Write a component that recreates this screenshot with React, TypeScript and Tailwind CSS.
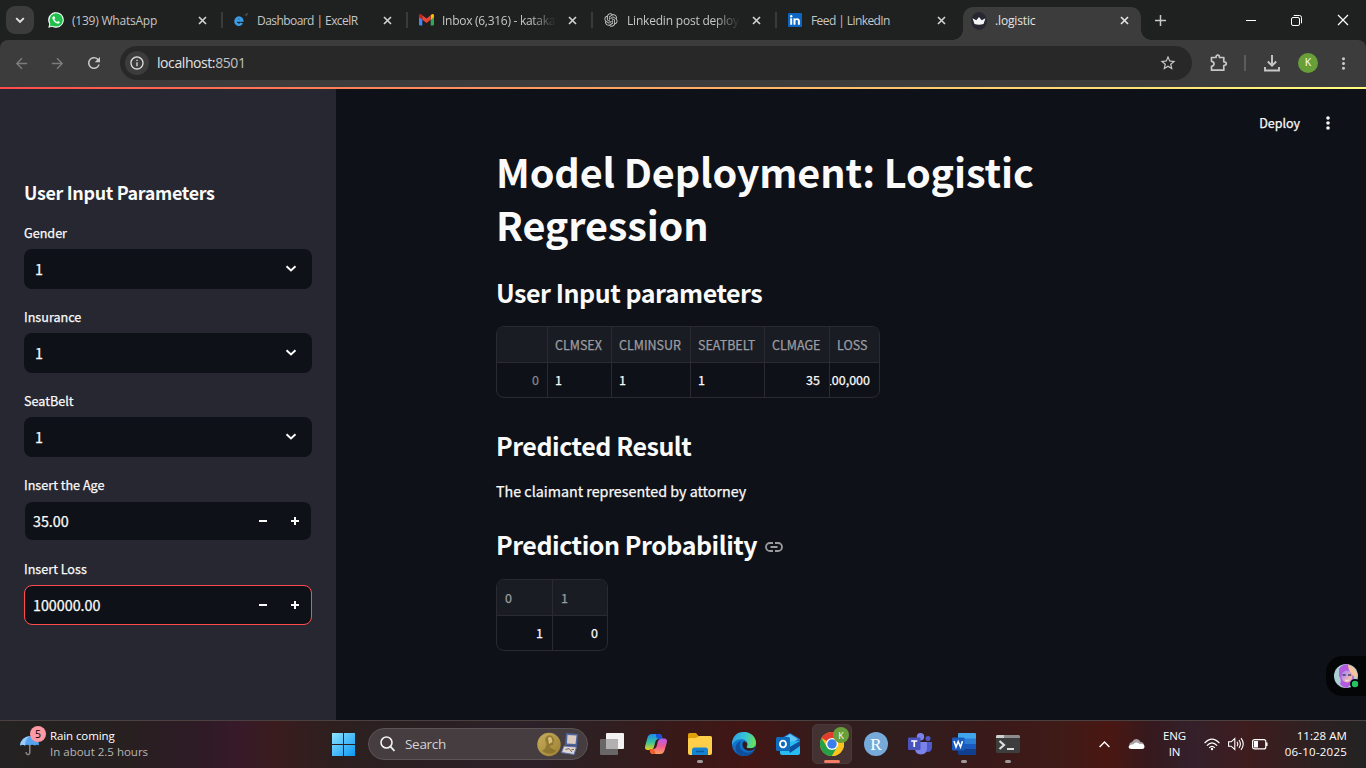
import React from "react";
import { RiOpenaiFill } from "react-icons/ri";
import {
  MdStarOutline,
  MdMoreVert,
  MdRefresh,
  MdArrowBack,
  MdArrowForward,
  MdOutlineInfo,
} from "react-icons/md";

const seg = "font-['Open_Sans','Noto_Sans',sans-serif]";
const src = "font-['Noto_Sans_CJK_SC',sans-serif]";
const heavy = "[-webkit-text-stroke:0.25px]";

/* ---------- favicons ---------- */

const WhatsApp = () => (
  <svg width="16" height="16" viewBox="0 0 16 16">
    <path d="M0.3 15.8 1.3 12A7.8 7.8 0 1 1 4.2 14.8Z" fill="#fff" />
    <circle cx="8.1" cy="7.9" r="6.7" fill="#1fc04b" />
    <path d="M1.7 14.4l.9-3.4 2.5 2.6z" fill="#1fc04b" />
    <path d="M5.4 4.2c-.9.5-1.3 1.5-.9 2.6.8 2.2 2.5 3.9 4.7 4.7 1.2.4 2.4-.1 2.7-1.4l-1.9-1.1-.9.9C7.8 9.4 6.9 8.4 6.4 7.2l.8-.9-.7-1.9z" fill="#fff" />
  </svg>
);

const ExcelR = () => (
  <svg width="16" height="16" viewBox="0 0 16 16">
    <path d="M2.600 8.400H9.200A3.400 3.600 0 1 0 8.800 11" fill="none" stroke="#3a9de8" strokeWidth="2.500" />
    <path d="M10 3.500 15.500.500 13.500 4.500 12.500 3Z" fill="#4c4c4c" />
  </svg>
);

const Gmail = () => (
  <svg width="15" height="12" viewBox="0 0 15 12">
    <path d="M0 2.500V10.500Q0 11.500 1 11.500H3.300V5Z" fill="#4285f4" />
    <path d="M15 2.500V10.500Q15 11.500 14 11.500H11.700V5Z" fill="#34a853" />
    <path d="M11.700 1.400V5.800L15 3.300V1.600C15 .1 13.400-.4 12.400.6Z" fill="#fbbc04" />
    <path d="M3.300 1.400V5.800L0 3.300V1.600C0 .1 1.600-.4 2.600.6Z" fill="#c5221f" />
    <path d="M3.300 5.800V1.300L7.500 4.400 11.700 1.300V5.800L7.500 9Z" fill="#ea4335" />
  </svg>
);

const LinkedIn = () => (
  <svg width="14" height="14" viewBox="0 0 14 14">
    <rect width="14" height="14" rx="1" fill="#0a66c2" />
    <path d="M2.200 5.300h2v6.500h-2zM5.500 5.300h1.900v.9c.9-1.600 4.500-1.500 4.500 1.800v3.800h-2V8.500c0-2-2.400-1.800-2.400 0v3.300h-2z" fill="#fff" />
    <circle cx="3.200" cy="3.200" r="1.200" fill="#fff" />
  </svg>
);

const Crown = () => (
  <svg width="16" height="18" viewBox="0 0 16 18">
    <ellipse cx="8" cy="9" rx="7.900" ry="9" fill="#262730" />
    <path d="M1.500 6.300 5.300 8.300 8 5 10.700 8.300 14.500 6.300 12.500 12Q8 13.300 3.500 12Z" fill="#f4f4f6" />
  </svg>
);

const Close = ({ c = "#d0d0d0" }: { c?: string }) => (
  <svg width="9" height="9" viewBox="0 0 9 9" className="shrink-0">
    <path d="M1 1 8 8M8 1 1 8" stroke={c} strokeWidth="1.700" />
  </svg>
);

type TabProps = { icon: React.ReactNode; title: string; width: string; pad: string; spacing: string; fade?: boolean };

const Tab = ({ icon, title, width, pad, spacing, fade }: TabProps) => (
  <div className={`flex h-4 shrink-0 items-center border-r-2 border-[#444746]/70 ${width} ${pad}`}>
    <div className="flex w-4 shrink-0 items-center justify-center">{icon}</div>
    <div
      className={`ml-2 flex-1 overflow-hidden whitespace-nowrap pt-px text-[12px] leading-4 text-[#c6c6c6] ${spacing} ${
        fade ? "[mask-image:linear-gradient(to_right,#000_78%,transparent_100%)]" : ""
      }`}
    >
      {title}
    </div>
    <div className="ml-3 mr-[14px]">
      <Close />
    </div>
  </div>
);

const TabStrip = () => (
  <div className={`flex h-10 shrink-0 bg-[#1f2020] ${seg}`}>
    <div className="flex h-10 w-[40px] shrink-0 items-center pl-[6px]">
      <div className="flex size-7 items-center justify-center rounded-[9px] bg-[#3c3c3c]">
        <svg width="10" height="7" viewBox="0 0 10 7">
          <path d="M1.200 1.200 5 5 8.800 1.200" fill="none" stroke="#e3e3e3" strokeWidth="1.900" />
        </svg>
      </div>
    </div>
    <div className="flex items-center">
      <Tab icon={<WhatsApp />} title="(139) WhatsApp" width="w-[183px]" pad="pl-2" spacing="tracking-[-0.22px]" />
      <Tab icon={<ExcelR />} title="Dashboard | ExcelR" width="w-[185px]" pad="pl-[10px]" spacing="tracking-[-0.56px]" />
      <Tab icon={<Gmail />} title="Inbox (6,316) - kataka" width="w-[185px]" pad="pl-[10px]" spacing="tracking-[-0.28px]" fade />
      <Tab icon={<RiOpenaiFill size={16} color="#c9c9c9" />} title="Linkedin post deploy" width="w-[184px]" pad="pl-[10px]" spacing="tracking-[-0.2px]" fade />
      <div className="flex w-[186px] items-center pl-[10px]">
        <div className="flex w-4 justify-center"><LinkedIn /></div>
        <div className="ml-2 flex-1 pt-px text-[12px] leading-4 tracking-[-0.58px] text-[#c6c6c6]">Feed | LinkedIn</div>
        <div className="mr-[17px]"><Close /></div>
      </div>
    </div>
    <div className="relative mt-[7px] flex h-[33px] w-[178px] items-center rounded-t-[10px] bg-[#3c3c3c] pb-[6px] pl-2">
      <div className="absolute bottom-0 left-[-10px] size-[10px] bg-[radial-gradient(circle_at_0_0,transparent_9.5px,#3c3c3c_10px)]" />
      <div className="absolute bottom-0 right-[-10px] size-[10px] bg-[radial-gradient(circle_at_100%_0,transparent_9.5px,#3c3c3c_10px)]" />
      <Crown />
      <div className="ml-2 flex-1 pt-px text-[12px] leading-4 tracking-[-0.15px] text-[#e3e3e3]">.logistic</div>
      <div className="mr-[12px]"><Close c="#e3e3e3" /></div>
    </div>
    <div className="flex flex-1 items-center pl-[14px]">
      <svg width="11" height="11" viewBox="0 0 11 11"><path d="M5.500 0V11M0 5.500H11" stroke="#c7c7c7" strokeWidth="1.500" /></svg>
      <div className="ml-auto flex items-center gap-[35px] pr-[17px]">
        <div className="h-px w-[10px] bg-white" />
        <svg width="11" height="11" viewBox="0 0 11 11" fill="none" stroke="#fff">
          <rect x=".5" y="2.500" width="8" height="8" rx="1.500" />
          <path d="M2.700.500H8.500Q10.500.500 10.500 2.500V8.300" />
        </svg>
        <svg width="12" height="12" viewBox="0 0 12 12"><path d="M1 1 11 11M11 1 1 11" stroke="#fff" strokeWidth="1.200" /></svg>
      </div>
    </div>
  </div>
);

const Toolbar = () => (
  <div className={`h-[47px] shrink-0 bg-[#1f2020] ${seg}`}>
    <div className="flex h-[47px] items-center rounded-t-[8px] bg-[#3c3c3c]">
      <div className="flex h-full w-[120px] items-center gap-[19px] pb-px pl-[13px]">
        <MdArrowBack size={17} color="#7c7c7c" />
        <MdArrowForward size={17} color="#7c7c7c" />
        <MdRefresh size={18} color="#c7c7c7" />
      </div>
      <div className="mb-px flex h-[34px] w-[1072px] items-center rounded-full bg-[#282828] pl-[5px]">
        <div className="flex size-6 items-center justify-center rounded-full bg-[#3c3c3c]">
          <MdOutlineInfo size={16} color="#dcdcdc" />
        </div>
        <div className="ml-2 flex-1 text-[14px] leading-5 tracking-[-0.42px] text-[#e3e3e3]">
          localhost:<span className="text-[#c0c0c0]">8501</span>
        </div>
        <MdStarOutline size={18} color="#c7c7c7" className="mr-[15px]" />
      </div>
      <div className="flex flex-1 items-center pb-px pl-[18px]">
        <svg width="18" height="18" viewBox="0 0 18 18" fill="none" stroke="#c7c7c7" strokeWidth="1.700" strokeLinejoin="round">
          <path d="M1.500 3.500H6Q6 1.200 7.700 1.200Q9.500 1.200 9.500 3.500H13.800V7.800Q16.300 7.800 16.300 9.600Q16.300 11.500 13.800 11.500V16.200H1.500V12.300Q4 12 4 9.800Q4 7.700 1.500 7.300Z" />
        </svg>
        <div className="ml-[16px] h-4 w-[2px] bg-[#5c5c5c]" />
        <svg width="16" height="17" viewBox="0 0 16 17" className="ml-[18px]" fill="none" stroke="#c7c7c7" strokeWidth="1.900">
          <path d="M8 0V10.500M3.800 6.500 8 10.700 12.200 6.500M1 12V15.500H15V12" />
        </svg>
        <div className="ml-[18px] flex size-5 items-center justify-center rounded-full bg-[#689f38] text-[10.500px] text-white">K</div>
        <MdMoreVert size={19} color="#c7c7c7" className="ml-[16px]" />
      </div>
    </div>
  </div>
);

/* ---------- sidebar ---------- */

const Label = ({ children }: { children: React.ReactNode }) => (
  <div className="h-6 text-[12.6px] leading-4 text-[#fafafa]">{children}</div>
);

const Select = ({ label }: { label: string }) => (
  <div className="mb-5">
    <Label>{label}</Label>
    <div className="flex h-10 items-center justify-between rounded-lg bg-[#0e1117] pl-[11px] pr-[15px] text-[14.3px] leading-6 text-[#fafafa]">
      <span className="pb-px">1</span>
      <svg width="12" height="8" viewBox="0 0 12 8"><path d="M1.500 1.300 6 5.500 10.500 1.300" fill="none" stroke="#fafafa" strokeWidth="2" /></svg>
    </div>
  </div>
);

const NumberInput = ({ label, value, focus }: { label: string; value: string; focus?: boolean }) => (
  <div className="mb-5">
    <Label>{label}</Label>
    <div className={`flex h-10 items-center rounded-lg border bg-[#0e1117] bg-clip-padding pl-2 text-[14.3px] leading-6 text-[#fafafa] ${focus ? "border-[#ff4b4b]" : "border-[#262730]"}`}>
      <span className="flex-1 pb-px">{value}</span>
      <svg width="8" height="8" viewBox="0 0 8 8" className="mr-6"><path d="M0 4H8" stroke="#fafafa" strokeWidth="2" /></svg>
      <svg width="8" height="8" viewBox="0 0 8 8" className="mr-3"><path d="M0 4H8M4 0V8" stroke="#fafafa" strokeWidth="2" /></svg>
    </div>
  </div>
);

const Sidebar = () => (
  <div className={`w-[336px] shrink-0 bg-[#262730] px-6 pt-[91px] ${heavy}`}>
    <div className="mb-[21px] text-[17.9px] font-semibold leading-6 tracking-[-0.32px] text-[#fafafa] [-webkit-text-stroke:0]">User Input Parameters</div>
    <Select label="Gender" />
    <Select label="Insurance" />
    <Select label="SeatBelt" />
    <NumberInput label="Insert the Age" value="35.00" />
    <NumberInput label="Insert Loss" value="100000.00" focus />
  </div>
);

/* ---------- main ---------- */

const H2 = ({ children }: { children: React.ReactNode }) => (
  <div className="flex h-[34px] items-center whitespace-nowrap text-[25px] font-semibold leading-[34px] tracking-[-0.46px] [-webkit-text-stroke:0]">{children}</div>
);

const line = "border-[#292b31]";

type Cellv = { v: string; right?: boolean; dim?: boolean };

const Table = ({ cols, head, row, headPad }: { cols: string; head: string[]; row: Cellv[]; headPad: string }) => (
  <div className={`w-fit overflow-hidden rounded-lg border ${line} text-[12.5px] leading-5`}>
    <div className={`grid ${cols} h-9 border-b ${line} bg-[#1a1c24] text-[#9b9ca1]`}>
      {head.map((h, i) => (
        <div key={i} className={`flex items-center ${headPad} pt-px whitespace-nowrap ${i < head.length - 1 ? `border-r ${line}` : ""}`}>{h}</div>
      ))}
    </div>
    <div className={`grid ${cols} h-[34px]`}>
      {row.map((c, i) => (
        <div
          key={i}
          className={`flex items-center overflow-hidden pl-[7px] ${c.right ? "justify-end" : ""} ${c.dim ? "pr-2 text-[#84868b]" : "pr-[9px] text-[#fafafa]"} ${
            i < row.length - 1 ? `border-r ${line}` : ""
          }`}
        >
          {c.v}
        </div>
      ))}
    </div>
  </div>
);

const Main = () => (
  <div className={`flex-1 bg-[#0e1117] text-[#fafafa] ${heavy}`}>
    <div className="flex h-[55px] items-center justify-end pr-[33px] pt-[13px]">
      <div className="mr-[23px] text-[12.5px] leading-5">Deploy</div>
      <svg width="10" height="16" viewBox="0 0 10 16" fill="#fafafa">
        <circle cx="5" cy="3" r="1.800" /><circle cx="5" cy="8" r="1.800" /><circle cx="5" cy="13" r="1.800" />
      </svg>
    </div>
    <div className="w-[864px] pl-40">
      <div className="w-[600px] text-[39.6px] font-bold leading-[53px] tracking-[-0.13px] [-webkit-text-stroke:0]">Model Deployment: Logistic Regression</div>
      <div className="mt-[25px]"><H2>User Input parameters</H2></div>
      <div className="mt-[17px]">
        <Table
          headPad="pl-[7px]"
          cols="grid-cols-[51px_64px_79px_74px_65px_49px]"
          head={["", "CLMSEX", "CLMINSUR", "SEATBELT", "CLMAGE", "LOSS"]}
          row={[{ v: "0", right: true, dim: true }, { v: "1" }, { v: "1" }, { v: "1" }, { v: "35", right: true }, { v: "100,000", right: true }]}
        />
      </div>
      <div className="mt-[30px]"><H2>Predicted Result</H2></div>
      <div className="mt-[17px] text-[14.3px] leading-6">The claimant represented by attorney</div>
      <div className="mt-[24px]">
        <H2>
          Prediction Probability
          <svg width="18" height="10" viewBox="0 0 18 10" className="ml-2 mt-[5px]" fill="none" stroke="#9a9b9f" strokeWidth="1.800">
            <path d="M8 1H5a4 4 0 0 0 0 8H8M10 1h3a4 4 0 0 1 0 8H10M5.500 5H12.500" />
          </svg>
        </H2>
      </div>
      <div className="mt-[18px]">
        <Table headPad="pl-2" cols="grid-cols-[56px_54px]" head={["0", "1"]} row={[{ v: "1", right: true }, { v: "0", right: true }]} />
      </div>
    </div>
  </div>
);

const Assistant = () => (
  <div className="absolute right-0 top-[656px] flex h-10 w-10 items-center rounded-l-2xl bg-[#040506] pl-2">
    <svg width="26" height="26" viewBox="0 0 26 26">
      <defs>
        <linearGradient id="av" x1="0" y1="0" x2="1" y2="1">
          <stop offset="0" stopColor="#9f8ae0" /><stop offset=".4" stopColor="#c99be0" /><stop offset=".7" stopColor="#f0b8a0" /><stop offset="1" stopColor="#c9a6e8" />
        </linearGradient>
      </defs>
      <circle cx="12" cy="13" r="12" fill="#a9cfd4" />
      <path d="M5 6Q8 1 14 1.200Q21 5 20 13Q20 20 13 24.900Q8 24 6 21Q8 17 5 13Z" fill="#b35ae0" />
      <path d="M14 1.500Q24 5 23 15L18 12Q14 7 14 1.500Z" fill="#f6c49a" />
      <ellipse cx="13" cy="13.500" rx="5.500" ry="6" fill="url(#av)" />
      <path d="M8.500 12h3.200M14 12H17.200" stroke="#3b4067" strokeWidth="1.600" />
      <path d="M11 17Q13 18.500 15 17" stroke="#f4e4f0" fill="none" />
      <circle cx="21" cy="21" r="5" fill="#050607" /><circle cx="21" cy="21" r="3.200" fill="#22c55e" />
    </svg>
  </div>
);

/* ---------- taskbar ---------- */

const Cell = ({ children, dot }: { children: React.ReactNode; dot?: boolean }) => (
  <div className="relative flex h-[46px] w-11 shrink-0 items-center justify-center">
    {children}
    {dot && <div className="absolute bottom-[4px] left-[19px] h-[3px] w-[6px] rounded-full bg-[#a09a9a]" />}
  </div>
);

const Copilot = () => (
  <svg width="24" height="22" viewBox="0 0 24 22">
    <defs>
      <linearGradient id="c1" x1="0" y1="0" x2="0" y2="1"><stop stopColor="#1a8df0" /><stop offset=".5" stopColor="#35c0a0" /><stop offset="1" stopColor="#e8d21e" /></linearGradient>
      <linearGradient id="c2" x1="0" y1="0" x2="0" y2="1"><stop stopColor="#b25cf0" /><stop offset=".5" stopColor="#ee5a93" /><stop offset="1" stopColor="#ffa05c" /></linearGradient>
    </defs>
    <path d="M8 1H15Q17.500 1 18 4L18.500 6H15Q12 6 11.300 9L10 14Q9 17 6 17H4Q0 17 1.300 12.500L3.500 4.500Q4.500 1 8 1Z" fill="url(#c1)" />
    <path d="M12 1H15Q17.500 1 18 4L18.500 6H15.500Q12.500 6 12 3Z" fill="#1c52d8" />
    <path d="M16 21H9Q6.500 21 6 18L5.500 16H9Q12 16 12.700 13L14 8Q15 5.500 18 5.500H20Q24 5.500 22.700 10L20.500 17.500Q19.500 21 16 21Z" fill="url(#c2)" />
    <path d="M6 18L5.500 16H9Q10.500 16 11 19L11.500 21H9Q6.500 21 6 18Z" fill="#f0602c" />
  </svg>
);

const Explorer = () => (
  <svg width="24" height="22" viewBox="0 0 24 22">
    <path d="M0 1.500Q0 0 1.500 0H8L10.500 3V8H0Z" fill="#e0a008" />
    <path d="M0 6.500Q0 5 1.500 5H8L11 3H22.500Q24 3 24 4.500V20Q24 22 22 22H2Q0 22 0 20Z" fill="#ffcf4a" />
    <path d="M4 22V17Q4 14.500 6.500 14.500H17.500Q20 14.500 20 17V22Z" fill="#1583d2" />
    <path d="M8 18.500H16" stroke="#0b5a9c" strokeWidth="1.500" />
  </svg>
);

const Edge = () => (
  <svg width="24" height="24" viewBox="0 0 24 24">
    <defs>
      <linearGradient id="e1" x1="0" y1=".3" x2="1" y2=".5"><stop stopColor="#2f9fe6" /><stop offset=".5" stopColor="#35c3d6" /><stop offset="1" stopColor="#6be05a" /></linearGradient>
      <linearGradient id="e2" x1="0" y1="0" x2="0" y2="1"><stop stopColor="#1483d8" /><stop offset="1" stopColor="#1066bd" /></linearGradient>
    </defs>
    <circle cx="12" cy="12" r="12" fill="url(#e2)" />
    <path d="M0 11C1 3 6 0 12 0C19 0 24 5 24 11C24 15 20 16.500 17 16.300C14.500 16 14 15 15 14C17 10 13 7 9.500 7C5 7 2 9 0 13Z" fill="url(#e1)" />
    <path d="M9.500 9C6 12 8 19 14 20.500C17 21.500 20.500 20 22.300 17.800C19 26 7 25.500 4 19C2.500 14 5.500 9.500 9.500 9Z" fill="#0d4f9e" />
    <path d="M15 14C14 15 14.500 16 17 16.300C19.500 16.500 21.500 16 24 15C22.500 18.500 17 19.500 14 18C10.500 16.200 9.500 12 11.500 9.500C15 9.500 16 12 15 14Z" fill="#35191a" />
  </svg>
);

const Outlook = () => (
  <svg width="24" height="22" viewBox="0 0 24 22">
    <path d="M4 6 14 0 24 6V14H4Z" fill="#1a76c9" />
    <path d="M6 6 14 1 22 6 14 12Z" fill="#5fc6f5" />
    <path d="M4 9 24 8V20Q24 22 22 22H6Q4 22 4 20Z" fill="#28bdf2" />
    <path d="M12 15 24 8V13L14 20Z" fill="#0f4f9c" />
    <rect x="0" y="4" width="14" height="14" rx="1.500" fill="#0f6cbd" />
    <ellipse cx="7" cy="11" rx="3" ry="3.400" fill="none" stroke="#fff" strokeWidth="1.900" />
  </svg>
);

const Chrome = () => (
  <svg width="24" height="24" viewBox="0 0 24 24">
    <circle cx="12" cy="12" r="12" fill="#fcc31e" />
    <path d="M12 12 1.600 6A12 12 0 0 1 22.400 6H12Z" fill="#e33b2e" />
    <path d="M1.600 6A12 12 0 0 0 12 24L17.200 15 12 12 6.800 15Z" fill="#24a148" />
    <path d="M22.400 6A12 12 0 0 1 12 24L17.200 15V6Z" fill="#fcc31e" />
    <circle cx="12" cy="12" r="6" fill="#fff" /><circle cx="12" cy="12" r="4.700" fill="#3b7ded" />
  </svg>
);

const Teams = () => (
  <svg width="24" height="22" viewBox="0 0 24 22">
    <circle cx="20" cy="5.500" r="2.500" fill="#5059c9" />
    <path d="M15 9H24V14Q24 19 19.500 19Q16 19 15 16Z" fill="#5059c9" />
    <circle cx="12.500" cy="3.800" r="3.700" fill="#7b83eb" />
    <path d="M7 9H19V15Q19 21.500 13 21.500Q7 21.500 7 15Z" fill="#7b83eb" />
    <rect x="0" y="4.500" width="12.500" height="12.500" rx="1.200" fill="#4b53bc" />
    <path d="M3.200 8H9.300M6.250 8V14" stroke="#fff" strokeWidth="1.700" />
  </svg>
);

const Word = () => (
  <svg width="24" height="22" viewBox="0 0 24 22">
    <path d="M6 1Q6 0 7 0H23Q24 0 24 1V6H6Z" fill="#41a5ee" />
    <path d="M6 5.500H24V11H6Z" fill="#2b7cd3" /><path d="M6 11H24V16.500H6Z" fill="#185abd" />
    <path d="M6 16.500H24V21Q24 22 23 22H7Q6 22 6 21Z" fill="#103f91" />
    <rect x="0" y="4.500" width="12.500" height="13" rx="1.200" fill="#185abd" />
    <path d="M2 8 4 14 6.200 8.500 8.500 14 10.500 8" stroke="#fff" strokeWidth="1.600" fill="none" />
  </svg>
);

const Terminal = () => (
  <svg width="24" height="18" viewBox="0 0 24 18">
    <rect width="24" height="18" rx="1.500" fill="#3d3d3d" />
    <path d="M0 3V1.500Q0 0 1.500 0H22.500Q24 0 24 1.500V3Z" fill="#8d8d8d" /><path d="M0 3V1.500Q0 0 1.500 0H8V3Z" fill="#cfcfcf" />
    <path d="M3.500 6 8 10 3.500 14" stroke="#dedede" strokeWidth="2.200" fill="none" /><path d="M11 14H18" stroke="#dedede" strokeWidth="2" />
  </svg>
);

const SearchArt = () => (
  <svg width="42" height="26" viewBox="0 0 42 26">
    <defs><linearGradient id="g1" x1="0" y1="0" x2="1" y2="1"><stop stopColor="#c7ad5c" /><stop offset="1" stopColor="#9a8030" /></linearGradient></defs>
    <circle cx="12" cy="13.500" r="11.700" fill="url(#g1)" />
    <path d="M9 6Q13 2.500 16 6L17 9Q18 10 16.500 11L16 14Q13 14 12.500 16L19 20Q13 25 5 20Q10 17 9.500 12Q7 9 9 6Z" fill="#7a6424" opacity=".6" />
    <path d="M11 7Q13 5 14.500 7L15.500 11 12 13Z" fill="#d8c07a" />
    <path d="M29 2 41 3 40 15 28 14Z" fill="#4e659c" /><path d="M30.500 4 39.500 4.500 38.500 13 30 12.500Z" fill="#dccbc0" />
    <path d="M27 15 39.500 16 37 23.500 24.500 21.500Z" fill="#dfd5d0" stroke="#5c77b5" />
    <path d="M28.500 18.500 32 17.500 35 21M34.500 18.500H37" stroke="#75665c" fill="none" />
  </svg>
);

const Taskbar = () => (
  <div className={`flex h-12 shrink-0 border-t border-[#4b4140] bg-[linear-gradient(90deg,#242222_0px,#272020_120px,#2f1a26_205px,#371a2a_235px,#3a1b1e_275px,#2e1f1e_330px,#2a2022_400px,#2b2128_530px,#2f1f21_600px,#391918_680px,#421615_750px,#351b1b_820px,#2f1e1f_880px,#3a1919_990px,#3f1b17_1060px,#4a1712_1110px,#35191e_1150px,#34202a_1190px,#3e1c1e_1250px,#2c2122_1320px,#232222_1366px)] ${seg}`}>
    <div className="flex w-[323px] items-center pl-5 pb-px">
      <div className="relative h-9 w-[30px]">
        <svg width="20" height="20" viewBox="0 0 20 20" className="mt-[10px]">
          <path d="M0 9.500Q1 1 10 0Q19 1 19 9.500Q17 8 15 9.500Q12 8 9.500 9.500Q7 8 5 9.500Q2.500 8 0 9.500Z" fill="#55a4ee" />
          <path d="M0 9.500Q1 1 10 0Q5 3 5 9.500Q2.500 8 0 9.500Z" fill="#9acbfa" />
          <path d="M9.800 9V16.500Q9.500 18.800 7.500 18.500Q6 18 6 16" stroke="#8b8583" strokeWidth="1.500" fill="none" />
        </svg>
        <div className="absolute left-[10px] top-0 flex size-4 items-center justify-center rounded-full bg-[#ff99a4] text-[10.5px] leading-none text-black">5</div>
      </div>
      <div className="text-[11.5px] leading-4">
        <div className="tracking-[-0.1px] text-white">Rain coming</div>
        <div className="text-[#b9b5b5]">In about 2.5 hours</div>
      </div>
    </div>
    <div className="flex w-[45px] items-center pl-[9px]">
      <svg width="23" height="23" viewBox="0 0 23 23">
        <defs><linearGradient id="w" x1="0" y1="0" x2="1" y2="1"><stop stopColor="#8fe4ff" /><stop offset="1" stopColor="#0a97f5" /></linearGradient></defs>
        <path d="M0 0H11V11H0ZM12 0H23V11H12ZM0 12H11V23H0ZM12 12H23V23H12Z" fill="url(#w)" />
      </svg>
    </div>
    <div className="mt-[7px] flex h-8 w-[220px] items-center rounded-full border border-[#5b5354] bg-[#453d40] pl-[11px] pr-[8px]">
      <svg width="15" height="16" viewBox="0 0 15 16" fill="none" stroke="#f2f2f2"><circle cx="6.500" cy="6.500" r="5.500" strokeWidth="1.600" /><path d="M10.500 10.700 14.500 15" strokeWidth="1.800" /></svg>
      <div className="ml-[10px] flex-1 text-[13.5px] leading-5 tracking-[-0.3px] text-[#d6d2d2]">Search</div>
      <SearchArt />
    </div>
    <div className="ml-[2px] flex">
      <Cell>
        <svg width="24" height="22" viewBox="0 0 24 22"><rect x="6" y="0" width="18" height="16" rx="1" fill="#f2f2f2" /><rect x="0" y="6" width="18" height="16" rx="1" fill="#686666" /><path d="M6 6H18V16H6Z" fill="#b2b0b0" /></svg>
      </Cell>
      <Cell><Copilot /></Cell>
      <Cell dot><Explorer /></Cell>
      <Cell><Edge /></Cell>
      <Cell><Outlook /></Cell>
      <Cell>
        <div className="relative flex size-10 items-center justify-center rounded-[5px] border border-[#4b3a3b] bg-[#443233]">
          <Chrome />
          <div className="absolute right-[2px] top-[2px] flex size-4 items-center justify-center rounded-full bg-[#689f38] text-[9px] leading-none text-white">K</div>
          <div className="absolute bottom-0 left-[11px] h-[3px] w-4 rounded-full bg-[#f47c65]" />
        </div>
      </Cell>
      <Cell><div className="flex size-6 items-center justify-center rounded-full bg-[#75aadb] font-['Liberation_Serif',serif] text-[17px] leading-none text-white">R</div></Cell>
      <Cell><Teams /></Cell>
      <Cell dot><Word /></Cell>
      <Cell dot><Terminal /></Cell>
    </div>
    <div className="ml-auto flex items-center pb-px pr-[19px] text-[11.5px] leading-4 text-white">
      <svg width="11" height="7" viewBox="0 0 11 7"><path d="M.6 6 5.500 1.100 10.400 6" fill="none" stroke="#fff" strokeWidth="1.400" /></svg>
      <svg width="17" height="12" viewBox="0 0 17 12" className="ml-[18px]">
        <path d="M2 8Q0 5 4 4Q7-1 11 2Q12 3 12.500 4Q16 4 16 8Z" fill="#a9a0a1" /><path d="M3.500 11Q0 11 .8 8Q2 6 5 6.500Q8 3 11.500 6Q16 5 16.500 8.500Q16.500 11 14 11Z" fill="#fff" />
      </svg>
      <div className="ml-[17px] w-[25px] text-center tracking-[-0.1px]">ENG<br />IN</div>
      <svg width="16" height="13" viewBox="0 0 16 13" className="ml-[17px]" fill="none" stroke="#fff" strokeWidth="1.200">
        <path d="M.6 5.200Q8-2.800 15.400 5.200M2.900 7.600Q8 2 13.100 7.600M5.200 9.800Q8 6.800 10.800 9.800" /><circle cx="8" cy="11" r="1.200" fill="#fff" stroke="none" />
      </svg>
      <svg width="17" height="14" viewBox="0 0 17 14" className="ml-2" fill="none" stroke="#fff" strokeWidth="1.100">
        <path d="M.6 4.800H3.200L6.800 1.500V12.500L3.200 9.200H.6ZM9 4.800Q10.600 7 9 9.200M11 3Q13.800 7 11 11M13 1.200Q17.500 7 13 12.800" />
      </svg>
      <svg width="17" height="11" viewBox="0 0 17 11" className="ml-[7px]"><rect x=".6" y=".6" width="13.200" height="9.300" rx="2" fill="none" stroke="#fff" strokeWidth="1.200" /><rect x="2" y="2" width="4" height="6.500" fill="#fff" /><path d="M14.800 3.500V7" stroke="#fff" strokeWidth="1.500" /></svg>
      <div className="ml-[15px] w-[63px] whitespace-nowrap text-right"><div className="tracking-[0.05px]">11:28 AM</div><div className="-ml-2 tracking-[0.22px]">06-10-2025</div></div>
    </div>
  </div>
);

export default function App() {
  return (
    <div className="relative flex h-[768px] w-[1366px] flex-col overflow-hidden bg-[#0e1117]">
      <TabStrip />
      <Toolbar />
      <div className={`flex h-[633px] shrink-0 flex-col ${src}`}>
        <div className="h-[2px] shrink-0 bg-linear-to-r from-[#ff4b4b] to-[#fffd80]" />
        <div className="flex flex-1">
          <Sidebar />
          <Main />
        </div>
      </div>
      <Taskbar />
      <Assistant />
    </div>
  );
}
